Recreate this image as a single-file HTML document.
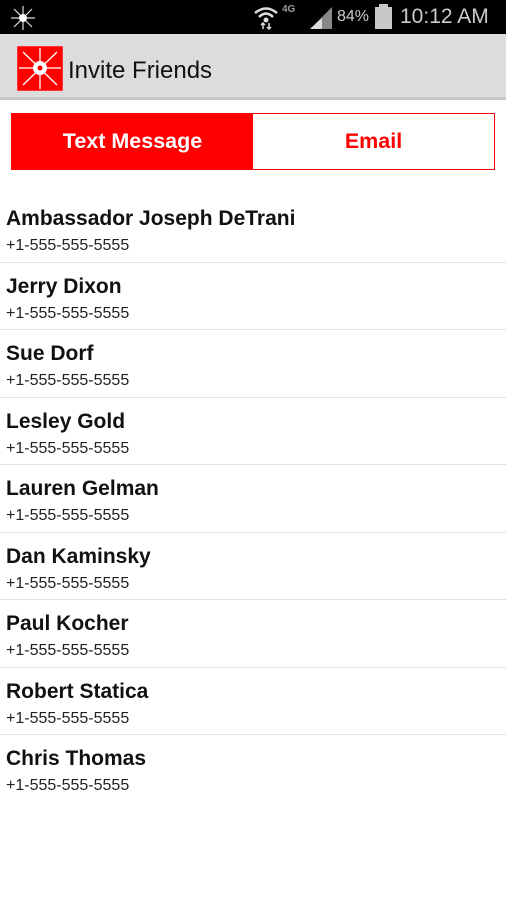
<!DOCTYPE html>
<html><head><style>
*{margin:0;padding:0;box-sizing:border-box}
body{width:506px;height:900px;background:#fff;font-family:"Liberation Sans",sans-serif;position:relative;overflow:hidden}
.sb{position:absolute;top:0;left:0;width:506px;height:34px;background:#000;color:#ccc}
.ab{position:absolute;top:34px;left:0;width:506px;height:66px;background:#dcdcdc;border-bottom:3px solid #c8c8c8}
.tabs{position:absolute;top:113px;left:11px;width:484px;height:57px;border:1px solid #f00;display:flex}
.tabs div{flex:1;display:flex;align-items:center;justify-content:center;font-weight:bold;font-size:21.5px}
.row{position:absolute;left:0;width:506px;height:67.5px;border-bottom:1px solid #e2e2e2}
.n{position:absolute;left:6px;top:12px;font-size:21px;font-weight:bold;color:#111}
.p{position:absolute;left:6px;top:42px;font-size:16px;color:#222}
</style></head><body>
<div class="sb">
<svg style="position:absolute;left:10px;top:5px" width="26" height="26" viewBox="0 0 26 26"><g stroke="#ddd" stroke-width="1.2"><line x1="13" y1="1" x2="13" y2="25"/><line x1="1" y1="13" x2="25" y2="13"/><line x1="4" y1="4" x2="22" y2="22"/><line x1="22" y1="4" x2="4" y2="22"/></g><circle cx="13" cy="13" r="4" fill="#fff"/></svg>
<svg style="position:absolute;left:253px;top:5px" width="26" height="25" viewBox="0 0 26 25"><path d="M2 8 Q13 -1 24 8" stroke="#ddd" stroke-width="2.5" fill="none"/><path d="M6 12 Q13 5 20 12" stroke="#ddd" stroke-width="2.5" fill="none"/><circle cx="13" cy="15" r="2.5" fill="#ddd"/><path d="M10 18v6M8 20l2-2 2 2M16 24v-6M14 22l2 2 2-2" stroke="#ddd" stroke-width="1.5" fill="none"/></svg>
<div style="position:absolute;left:282px;top:4px;font-size:10px;font-weight:bold;color:#999">4G</div>
<svg style="position:absolute;left:310px;top:7px" width="22" height="22"><polygon points="0,22 22,22 22,0" fill="#888"/><polygon points="0,22 12,22 12,11" fill="#ddd"/></svg>
<div style="position:absolute;left:337px;top:8px;font-size:16px;color:#ccc">84%</div>
<div style="position:absolute;left:375px;top:7px;width:17px;height:22px;background:#c8c8c8"></div>
<div style="position:absolute;left:379px;top:4px;width:9px;height:3px;background:#c8c8c8"></div>
<div style="position:absolute;left:400px;top:5px;font-size:21px;color:#ccc">10:12 AM</div>
</div>
<div class="ab">
<svg style="position:absolute;left:17px;top:12px" width="46" height="45" viewBox="0 0 46 45"><rect width="46" height="45" fill="#f00" stroke="#f66"/><g stroke="#fff" stroke-width="1.3"><line x1="23" y1="2" x2="23" y2="43"/><line x1="2" y1="22" x2="44" y2="22"/><line x1="6" y1="6" x2="40" y2="39"/><line x1="40" y1="6" x2="6" y2="39"/></g><circle cx="23" cy="22" r="7" fill="#fff"/><circle cx="23" cy="22" r="2.5" fill="#f00"/></svg>
<div style="position:absolute;left:68px;top:23px;font-size:24px;color:#111">Invite Friends</div>
</div>
<div class="tabs"><div style="background:#f00;color:#fff">Text Message</div><div style="color:#f00">Email</div></div>
<div class="row" style="top:195px"><div class="n">Ambassador Joseph DeTrani</div><div class="p">+1-555-555-5555</div></div>
<div class="row" style="top:262.5px"><div class="n">Jerry Dixon</div><div class="p">+1-555-555-5555</div></div>
<div class="row" style="top:330px"><div class="n">Sue Dorf</div><div class="p">+1-555-555-5555</div></div>
<div class="row" style="top:397.5px"><div class="n">Lesley Gold</div><div class="p">+1-555-555-5555</div></div>
<div class="row" style="top:465px"><div class="n">Lauren Gelman</div><div class="p">+1-555-555-5555</div></div>
<div class="row" style="top:532.5px"><div class="n">Dan Kaminsky</div><div class="p">+1-555-555-5555</div></div>
<div class="row" style="top:600px"><div class="n">Paul Kocher</div><div class="p">+1-555-555-5555</div></div>
<div class="row" style="top:667.5px"><div class="n">Robert Statica</div><div class="p">+1-555-555-5555</div></div>
<div class="row" style="top:735px;border:none"><div class="n">Chris Thomas</div><div class="p">+1-555-555-5555</div></div>
</body></html>
